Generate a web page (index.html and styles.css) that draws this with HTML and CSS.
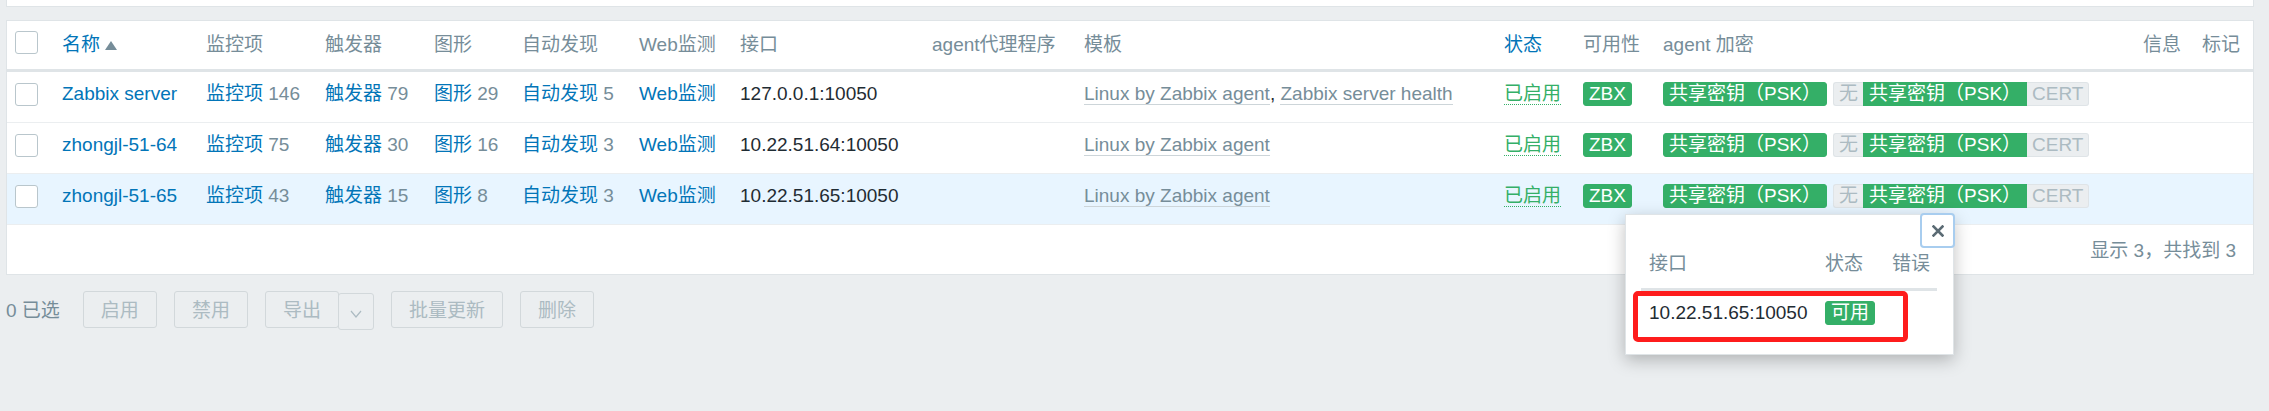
FILE: index.html
```html
<!DOCTYPE html>
<html lang="zh-CN">
<head>
<meta charset="utf-8">
<title>主机</title>
<link rel="stylesheet" href="styles.css">
</head>
<body>
<div class="page">
  <div class="top-panel"></div>
  <div class="list-panel">
    <table class="list-table">
      <colgroup>
        <col class="c-check"><col class="c-name"><col class="c-items"><col class="c-triggers"><col class="c-graphs"><col class="c-discovery"><col class="c-web"><col class="c-iface"><col class="c-proxy"><col class="c-templates"><col class="c-status"><col class="c-avail"><col class="c-enc"><col class="c-info"><col class="c-tags">
      </colgroup>
      <thead>
        <tr>
          <th><span class="checkbox checkbox-head"></span></th>
          <th><a class="link">名称</a><svg class="sort-arrow" width="12" height="9" viewBox="0 0 12 9"><polygon points="6,0 12,9 0,9" fill="#768d99"/></svg></th>
          <th>监控项</th>
          <th>触发器</th>
          <th>图形</th>
          <th>自动发现</th>
          <th>Web监测</th>
          <th>接口</th>
          <th>agent代理程序</th>
          <th>模板</th>
          <th><a class="link">状态</a></th>
          <th>可用性</th>
          <th>agent 加密</th>
          <th>信息</th>
          <th>标记</th>
        </tr>
      </thead>
      <tbody>
        <tr>
          <td><span class="checkbox"></span></td>
          <td><a class="link">Zabbix server</a></td>
          <td><a class="link">监控项</a><span class="count"> 146</span></td>
          <td><a class="link">触发器</a><span class="count"> 79</span></td>
          <td><a class="link">图形</a><span class="count"> 29</span></td>
          <td><a class="link">自动发现</a><span class="count"> 5</span></td>
          <td><a class="link">Web监测</a></td>
          <td>127.0.0.1:10050</td>
          <td></td>
          <td><a class="tpl-link">Linux by Zabbix agent</a>, <a class="tpl-link">Zabbix server health</a></td>
          <td><a class="status-link">已启用</a></td>
          <td><span class="badge badge-green">ZBX</span></td>
          <td><span class="badge badge-green">共享密钥（PSK）</span><span class="status-group"><span class="badge badge-grey g-first">无</span><span class="badge badge-green g-mid">共享密钥（PSK）</span><span class="badge badge-grey g-last">CERT</span></span></td>
          <td></td>
          <td></td>
        </tr>
        <tr>
          <td><span class="checkbox"></span></td>
          <td><a class="link">zhongjl-51-64</a></td>
          <td><a class="link">监控项</a><span class="count"> 75</span></td>
          <td><a class="link">触发器</a><span class="count"> 30</span></td>
          <td><a class="link">图形</a><span class="count"> 16</span></td>
          <td><a class="link">自动发现</a><span class="count"> 3</span></td>
          <td><a class="link">Web监测</a></td>
          <td>10.22.51.64:10050</td>
          <td></td>
          <td><a class="tpl-link">Linux by Zabbix agent</a></td>
          <td><a class="status-link">已启用</a></td>
          <td><span class="badge badge-green">ZBX</span></td>
          <td><span class="badge badge-green">共享密钥（PSK）</span><span class="status-group"><span class="badge badge-grey g-first">无</span><span class="badge badge-green g-mid">共享密钥（PSK）</span><span class="badge badge-grey g-last">CERT</span></span></td>
          <td></td>
          <td></td>
        </tr>
        <tr class="row-hover">
          <td><span class="checkbox"></span></td>
          <td><a class="link">zhongjl-51-65</a></td>
          <td><a class="link">监控项</a><span class="count"> 43</span></td>
          <td><a class="link">触发器</a><span class="count"> 15</span></td>
          <td><a class="link">图形</a><span class="count"> 8</span></td>
          <td><a class="link">自动发现</a><span class="count"> 3</span></td>
          <td><a class="link">Web监测</a></td>
          <td>10.22.51.65:10050</td>
          <td></td>
          <td><a class="tpl-link">Linux by Zabbix agent</a></td>
          <td><a class="status-link">已启用</a></td>
          <td><span class="badge badge-green">ZBX</span></td>
          <td><span class="badge badge-green">共享密钥（PSK）</span><span class="status-group"><span class="badge badge-grey g-first">无</span><span class="badge badge-green g-mid">共享密钥（PSK）</span><span class="badge badge-grey g-last">CERT</span></span></td>
          <td></td>
          <td></td>
        </tr>
      </tbody>
    </table>
    <div class="table-paging">显示 3，共找到 3</div>
  </div>
  <div class="action-bar">
    <span class="selected-count">0 已选</span>
    <button class="btn" disabled>启用</button>
    <button class="btn" disabled>禁用</button>
    <div class="btn-split">
      <button class="btn" disabled>导出</button>
      <button class="btn btn-toggle" disabled><svg width="12" height="8" viewBox="0 0 12 8"><polyline points="1,1 6,7 11,1" fill="none" stroke="#acbbc2" stroke-width="1.2"/></svg></button>
    </div>
    <button class="btn" disabled>批量更新</button>
    <button class="btn" disabled>删除</button>
  </div>
</div>

<div class="hintbox">
  <button class="hint-close"><svg width="12" height="12" viewBox="0 0 12 12"><path d="M1.5 1.5 L10.5 10.5 M10.5 1.5 L1.5 10.5" stroke="#5b6b74" stroke-width="2.6" stroke-linecap="square"/></svg></button>
  <table class="hint-table">
    <colgroup><col class="h-iface"><col class="h-status"><col class="h-error"></colgroup>
    <thead>
      <tr><th>接口</th><th>状态</th><th>错误</th></tr>
    </thead>
    <tbody>
      <tr><td>10.22.51.65:10050</td><td><span class="badge badge-green">可用</span></td><td></td></tr>
    </tbody>
  </table>
  <div class="red-mark"></div>
</div>
</body>
</html>
```

FILE: styles.css
```css
* { box-sizing: border-box; }
html, body { margin: 0; padding: 0; }
body {
  position: relative;
  width: 2269px;
  height: 411px;
  overflow: hidden;
  background: #ebeef0;
  color: #1f2c33;
  font-family: "Liberation Sans", Arial, "Noto Sans CJK SC", sans-serif;
  font-size: 19px;
  line-height: 24px;
}
.page { padding: 0 15px 0 6px; }
.top-panel {
  height: 7px;
  background: #fff;
  border: 1px solid #dfe4e7;
  border-top: 0;
}
.list-panel {
  margin-top: 13px;
  background: #fff;
  border: 1px solid #dfe4e7;
}
.list-table {
  width: 100%;
  table-layout: fixed;
  border-collapse: separate;
  border-spacing: 0;
}
.c-check { width: 47px; }
.c-name { width: 144px; }
.c-items { width: 119px; }
.c-triggers { width: 109px; }
.c-graphs { width: 88px; }
.c-discovery { width: 117px; }
.c-web { width: 101px; }
.c-iface { width: 192px; }
.c-proxy { width: 152px; }
.c-templates { width: 420px; }
.c-status { width: 79px; }
.c-avail { width: 80px; }
.c-enc { width: 480px; }
.c-info { width: 59px; }
.c-tags { width: 59px; }

.list-table th {
  padding: 12px 8px 12px;
  text-align: left;
  font-weight: normal;
  color: #768d99;
  white-space: nowrap;
  border-bottom: 3px solid #dfe4e7;
}
.list-table td {
  padding: 10px 8px 16px;
  text-align: left;
  white-space: nowrap;
  border-bottom: 1px solid #ebeef0;
}
.row-hover td { background: #e8f5ff; }

.link { color: #0275b8; text-decoration: none; }
.count { color: #768d99; }
.sort-arrow { margin-left: 5px; vertical-align: 1px; }
.tpl-link {
  color: #768d99;
  text-decoration: none;
  border-bottom: 1px solid #cdd5d9;
}
.status-link {
  color: #34af67;
  text-decoration: none;
  border-bottom: 1px dotted #34af67;
}

.checkbox {
  display: inline-block;
  width: 23px;
  height: 23px;
  border: 1px solid #b9c6cc;
  border-radius: 3px;
  background: #fff;
  vertical-align: top;
  margin-top: 1px;
}
.checkbox-head { margin-top: -2px; }

.badge {
  display: inline-block;
  padding: 0 5px;
  border: 1px solid transparent;
  border-radius: 3px;
  line-height: 22px;
  vertical-align: top;
}
.badge-green { background: #34af67; border-color: #34af67; color: #fff; }
.badge-grey { background: #ebeef0; border-color: #dfe4e7; color: #acbbc2; }
.status-group {
  display: inline-flex;
  vertical-align: top;
  margin-left: 6px;
}
.status-group .badge { border-radius: 0; }
.status-group .g-first { border-radius: 3px 0 0 3px; border-right: 0; }
.status-group .g-last { border-radius: 0 3px 3px 0; border-left: 0; }

.table-paging {
  padding: 14px 17px 11px;
  text-align: right;
  color: #768d99;
}

.action-bar {
  display: flex;
  align-items: flex-start;
  gap: 17px;
  margin-top: 16px;
}
.selected-count {
  padding-top: 8px;
  margin-right: 6px;
  color: #768d99;
}
.btn {
  display: block;
  height: 37px;
  margin: 0;
  padding: 7px 17px 4px;
  border: 1px solid #d2d8db;
  border-radius: 3px;
  background: #ebeef0;
  color: #acbbc2;
  font: inherit;
  line-height: 24px;
}
.btn-split { display: flex; align-items: flex-start; }
.btn-toggle {
  width: 36px;
  margin-top: 2px;
  margin-left: -1px;
  padding: 0;
  display: flex;
  align-items: center;
  justify-content: center;
}
.btn-toggle svg { margin-top: 4px; }

.hintbox {
  position: absolute;
  left: 1625px;
  top: 214px;
  width: 329px;
  height: 141px;
  padding: 37px 16px 0 15px;
  background: #fff;
  border: 1px solid #dfe4e7;
  box-shadow: 0 5px 16px rgba(0, 0, 0, 0.25);
}
.hint-close {
  position: absolute;
  top: -2px;
  right: -2px;
  width: 35px;
  height: 35px;
  padding: 0;
  border: 2px solid #a8cdef;
  border-radius: 4px;
  background: #fff;
  display: flex;
  align-items: center;
  justify-content: center;
}
.hint-table {
  width: 100%;
  table-layout: fixed;
  border-collapse: separate;
  border-spacing: 0;
}
.h-iface { width: 176px; }
.h-status { width: 67px; }
.h-error { width: 53px; }
.hint-table th {
  padding: 0 8px 12px;
  text-align: left;
  font-weight: normal;
  color: #768d99;
  border-bottom: 3px solid #dfe4e7;
  white-space: nowrap;
}
.hint-table th:last-child { padding: 0 0 12px 8px; }
.hint-table td {
  padding: 10px 8px 10px;
  text-align: left;
  white-space: nowrap;
}
.red-mark {
  position: absolute;
  left: 7px;
  top: 76px;
  width: 275px;
  height: 51px;
  border: 5px solid #fe1c1c;
  border-radius: 5px;
}
```
